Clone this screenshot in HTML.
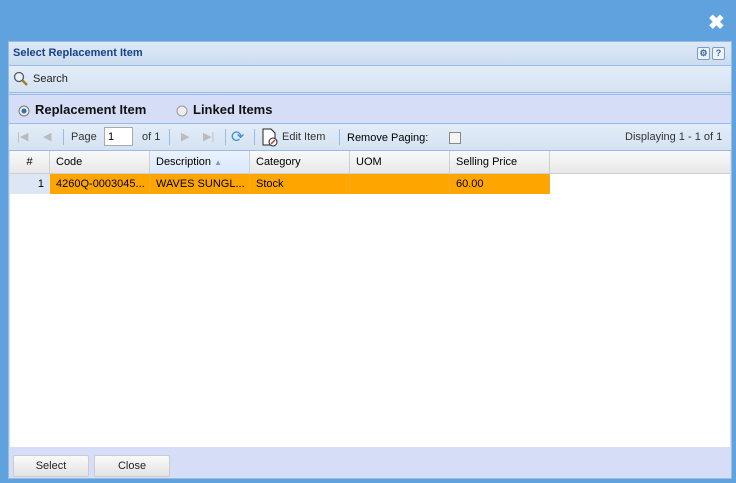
<!DOCTYPE html>
<html><head><style>
*{margin:0;padding:0;box-sizing:border-box}
body{width:736px;height:483px;background:#5fa2dd;font-family:"Liberation Sans",sans-serif;font-size:11px;color:#000;position:relative;overflow:hidden}
.abs{position:absolute;white-space:nowrap}
.x{left:708px;top:10px;color:#fff;font-size:20px;font-weight:bold}
.panel{left:8px;top:41px;width:724px;height:438px;background:#d5def6;border:1px solid #99bbe8}
.title{left:0;top:0;width:722px;height:24px;background:linear-gradient(#dfe9f5,#cbdcf0);border-bottom:1px solid #99bbe8;color:#15428b;font-weight:bold;font-size:11px;padding:5px 4px}
.tb{left:0;top:24px;width:722px;height:27px;background:linear-gradient(#e3edf8,#d4e2f2);border-bottom:1px solid #99bbe8}
.radio{left:0;top:52px;width:722px;height:30px;background:#d5def6;border-top:1px solid #99bbe8;border-bottom:1px solid #99bbe8}
.pg{left:0;top:82px;width:722px;height:27px;background:linear-gradient(#e3edf8,#d4e2f2);border-bottom:1px solid #99bbe8;color:#333}
.grid{left:1px;top:109px;width:720px;height:296px;background:#fff}
.hd{top:0;height:23px;background:linear-gradient(#f9f9f9,#e8e8e8);border-bottom:1px solid #d0d0d0;border-right:1px solid #d0d0d0;padding:5px 6px;color:#000}
.cell{top:23px;height:20px;background:#ffa500;padding:4px 6px;border-right:1px dotted #e0b060;overflow:hidden}
.btn{top:413px;width:76px;height:22px;border:1px solid #ccc;border-radius:2px;background:linear-gradient(#fafafa,#e3e3e3);text-align:center;line-height:20px;color:#222}
.sep{width:1px;height:16px;background:#99bbe8;top:5px}
.icb{width:13px;height:13px;border:1px solid #7a9cc6;background:#eef3fa;border-radius:2px;top:5px;font-size:9px;text-align:center;line-height:11px;color:#3a6aa8;font-weight:bold}
</style></head><body>
<div class="abs x">✖</div>
<div class="abs panel">
 <div class="abs title">Select Replacement Item</div>
 <div class="abs icb" style="left:688px">⚙</div>
 <div class="abs icb" style="left:703px">?</div>
 <div class="abs tb">
  <svg class="abs" style="left:4px;top:5px" width="16" height="16"><circle cx="6" cy="6" r="4.5" fill="#e8f0f8" stroke="#556" stroke-width="1.3"/><line x1="9.5" y1="9.5" x2="14" y2="14" stroke="#b07a30" stroke-width="2.5"/></svg>
  <span class="abs" style="left:24px;top:7px;color:#222">Search</span>
 </div>
 <div class="abs radio">
  <svg class="abs" style="left:9px;top:10px" width="12" height="12"><circle cx="6" cy="6" r="5" fill="#eee" stroke="#777"/><circle cx="6" cy="6" r="2.5" fill="#3a6aa8"/></svg>
  <span class="abs" style="left:26px;top:7px;font-size:13px;font-weight:bold;color:#111">Replacement Item</span>
  <svg class="abs" style="left:167px;top:10px" width="12" height="12"><circle cx="6" cy="6" r="5" fill="#eee" stroke="#999"/></svg>
  <span class="abs" style="left:184px;top:7px;font-size:13px;font-weight:bold;color:#111">Linked Items</span>
 </div>
 <div class="abs pg">
  <span class="abs" style="left:8px;top:6px;color:#bbb">|◀</span>
  <span class="abs" style="left:34px;top:6px;color:#bbb">◀</span>
  <div class="abs sep" style="left:54px"></div>
  <span class="abs" style="left:62px;top:7px">Page</span>
  <div class="abs" style="left:95px;top:3px;width:29px;height:19px;background:#fff;border:1px solid #aaa;padding:3px 3px;color:#000">1</div>
  <span class="abs" style="left:133px;top:7px">of 1</span>
  <div class="abs sep" style="left:160px"></div>
  <span class="abs" style="left:172px;top:6px;color:#bbb">▶</span>
  <span class="abs" style="left:194px;top:6px;color:#bbb">▶|</span>
  <div class="abs sep" style="left:216px"></div>
  <span class="abs" style="left:222px;top:3px;color:#3d8fd8;font-size:16px">⟳</span>
  <div class="abs sep" style="left:245px"></div>
  <svg class="abs" style="left:252px;top:4px" width="18" height="19"><path d="M2 1h8l4 4v12H2z" fill="#fff" stroke="#222"/><circle cx="12" cy="14" r="4" fill="#fff" stroke="#222"/><line x1="10" y1="16" x2="14" y2="12" stroke="#c33" stroke-width="1.5"/></svg>
  <span class="abs" style="left:273px;top:7px">Edit Item</span>
  <div class="abs sep" style="left:330px"></div>
  <span class="abs" style="left:338px;top:8px;color:#000">Remove Paging:</span>
  <div class="abs" style="left:440px;top:8px;width:12px;height:12px;border:1px solid #888;background:#f4f4f4"></div>
  <span class="abs" style="left:616px;top:7px">Displaying 1 - 1 of 1</span>
 </div>
 <div class="abs grid">
  <div class="abs hd" style="left:0;width:40px;text-align:center">#</div>
  <div class="abs hd" style="left:40px;width:100px">Code</div>
  <div class="abs hd" style="left:140px;width:100px;background:linear-gradient(#ebf3fd,#d9e8fb)">Description <span style="color:#7a9cc6;font-size:8px">▲</span></div>
  <div class="abs hd" style="left:240px;width:100px">Category</div>
  <div class="abs hd" style="left:340px;width:100px">UOM</div>
  <div class="abs hd" style="left:440px;width:100px">Selling Price</div>
  <div class="abs hd" style="left:540px;width:180px;border-right:none"></div>
  <div class="abs cell" style="left:0;width:40px;background:#dde6f4;text-align:right;border-right:none">1</div>
  <div class="abs cell" style="left:40px;width:100px">4260Q-0003045...</div>
  <div class="abs cell" style="left:140px;width:100px">WAVES SUNGL...</div>
  <div class="abs cell" style="left:240px;width:100px">Stock</div>
  <div class="abs cell" style="left:340px;width:100px"></div>
  <div class="abs cell" style="left:440px;width:100px">60.00</div>
 </div>
 <div class="abs btn" style="left:4px">Select</div>
 <div class="abs btn" style="left:85px">Close</div>
</div>
</body></html>
